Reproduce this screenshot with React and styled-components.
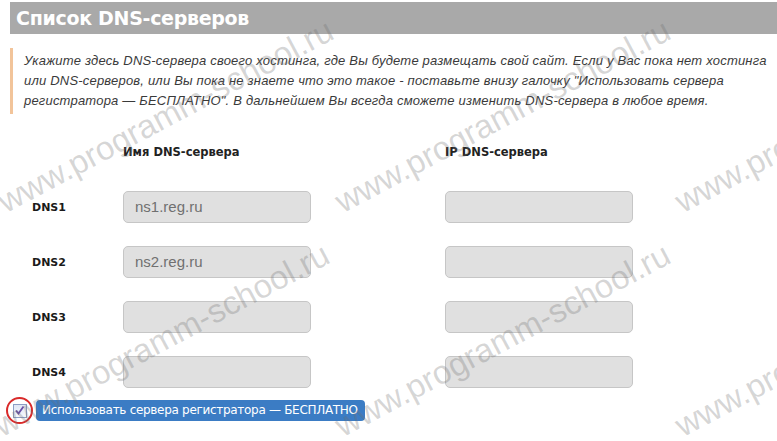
import React from "react";
import styled, { createGlobalStyle } from "styled-components";

const Global = createGlobalStyle`
  html, body { margin: 0; padding: 0; background: #ffffff; }
  body { width: 777px; height: 441px; overflow: hidden; }
`;

const Page = styled.div`
  position: relative;
  width: 777px;
  height: 441px;
  overflow: hidden;
  padding: 2px 0 0 10px;
  box-sizing: border-box;
  font-family: "Liberation Sans", Arial, sans-serif;
`;

const Header = styled.h2`
  margin: 0;
  height: 32px;
  background: #a9a9a9;
  color: #ffffff;
  font-family: "DejaVu Sans", Verdana, sans-serif;
  font-weight: bold;
  font-size: 19px;
  line-height: 32px;
  padding-left: 6px;
  letter-spacing: -0.3px;
`;

const Note = styled.p`
  margin: 14px 0 0 0;
  border-left: 3px solid #f2c49a;
  padding: 3px 0 3px 11px;
  font-style: italic;
  font-size: 13px;
  line-height: 20px;
  color: #3a3a3a;
  letter-spacing: 0.2px;
`;

const Grid = styled.div`
  display: grid;
  grid-template-columns: 91px 188px 134px 188px;
  grid-template-rows: 32px repeat(4, 32px);
  row-gap: 23px;
  align-items: center;
  margin: 22px 0 0 22px;
`;

const ColHead = styled.div`
  grid-column: ${(p) => p.$col};
  font-family: "DejaVu Sans", Verdana, sans-serif;
  font-weight: bold;
  font-size: 11.5px;
  color: #222;
  align-self: start;
  padding-top: 9px;
`;

const RowLabel = styled.div`
  grid-column: 1;
  font-family: "DejaVu Sans", Verdana, sans-serif;
  font-weight: bold;
  font-size: 11px;
  color: #1a1a1a;
`;

const Field = styled.div`
  grid-column: ${(p) => p.$col};
  height: 32px;
  box-sizing: border-box;
  background: #e0e0e0;
  border: 1px solid #c6c6c6;
  border-radius: 5px;
  padding: 0 11px;
  font-size: 15px;
  line-height: 30px;
  color: #707070;
`;

const CheckRow = styled.div`
  display: flex;
  align-items: center;
  gap: 3px;
  margin: 9px 0 0 -4px;
`;

const CheckWrap = styled.div`
  position: relative;
  width: 27px;
  height: 27px;
  display: flex;
  align-items: center;
  justify-content: center;
`;

const Circle = styled.div`
  position: absolute;
  inset: 0;
  border: 2px solid #d92a2a;
  border-radius: 50%;
  box-sizing: border-box;
`;

const Box = styled.div`
  width: 14px;
  height: 14px;
  box-sizing: border-box;
  border: 1px solid #8d9ec4;
  background: linear-gradient(#dfe6f5, #f6f8fc);
  display: flex;
  align-items: center;
  justify-content: center;
`;

const Badge = styled.div`
  background: #3b7cc4;
  color: #ffffff;
  border-radius: 4px;
  height: 21px;
  line-height: 21px;
  padding: 0 7px 0 6px;
  font-family: "DejaVu Sans", Verdana, sans-serif;
  font-size: 12px;
  letter-spacing: -0.3px;
`;

const Watermark = styled.span`
  position: absolute;
  left: ${(p) => p.$x}px;
  top: ${(p) => p.$y - 33}px;
  font-family: "Liberation Sans", Arial, sans-serif;
  font-size: 33px;
  line-height: 33px;
  white-space: nowrap;
  color: rgba(110, 110, 110, 0.28);
  transform-origin: 0 100%;
  transform: rotate(-28deg);
  pointer-events: none;
`;

const rows = [
  { label: "DNS1", name: "ns1.reg.ru" },
  { label: "DNS2", name: "ns2.reg.ru" },
  { label: "DNS3", name: "" },
  { label: "DNS4", name: "" },
];

const marks = [
  [8, 218], [345, 218], [685, 218],
  [4, 442], [345, 442], [685, 442],
];

export default function App() {
  return (
    <>
      <Global />
      <Page>
        <Header>Список DNS-серверов</Header>
        <Note>
          Укажите здесь DNS-сервера своего хостинга, где Вы будете размещать свой сайт. Если у Вас пока нет хостинга
          <br />
          или DNS-серверов, или Вы пока не знаете что это такое - поставьте внизу галочку "Использовать сервера
          <br />
          регистратора — БЕСПЛАТНО". В дальнейшем Вы всегда сможете изменить DNS-сервера в любое время.
        </Note>
        <Grid>
          <ColHead $col={2}>Имя DNS-сервера</ColHead>
          <ColHead $col={4}>IP DNS-сервера</ColHead>
          {rows.map((r) => (
            <React.Fragment key={r.label}>
              <RowLabel>{r.label}</RowLabel>
              <Field $col={2}>{r.name}</Field>
              <Field $col={4} />
            </React.Fragment>
          ))}
        </Grid>
        <CheckRow>
          <CheckWrap>
            <Circle />
            <Box>
              <svg width="11" height="11" viewBox="0 0 11 11">
                <path d="M2 5.5 L4.5 8.5 L9.5 1.5" fill="none" stroke="#6a4fa8" strokeWidth="1.8" />
              </svg>
            </Box>
          </CheckWrap>
          <Badge>Использовать сервера регистратора — БЕСПЛАТНО</Badge>
        </CheckRow>
        {marks.map(([x, y], i) => (
          <Watermark key={i} $x={x} $y={y}>www.programm-school.ru</Watermark>
        ))}
      </Page>
    </>
  );
}
